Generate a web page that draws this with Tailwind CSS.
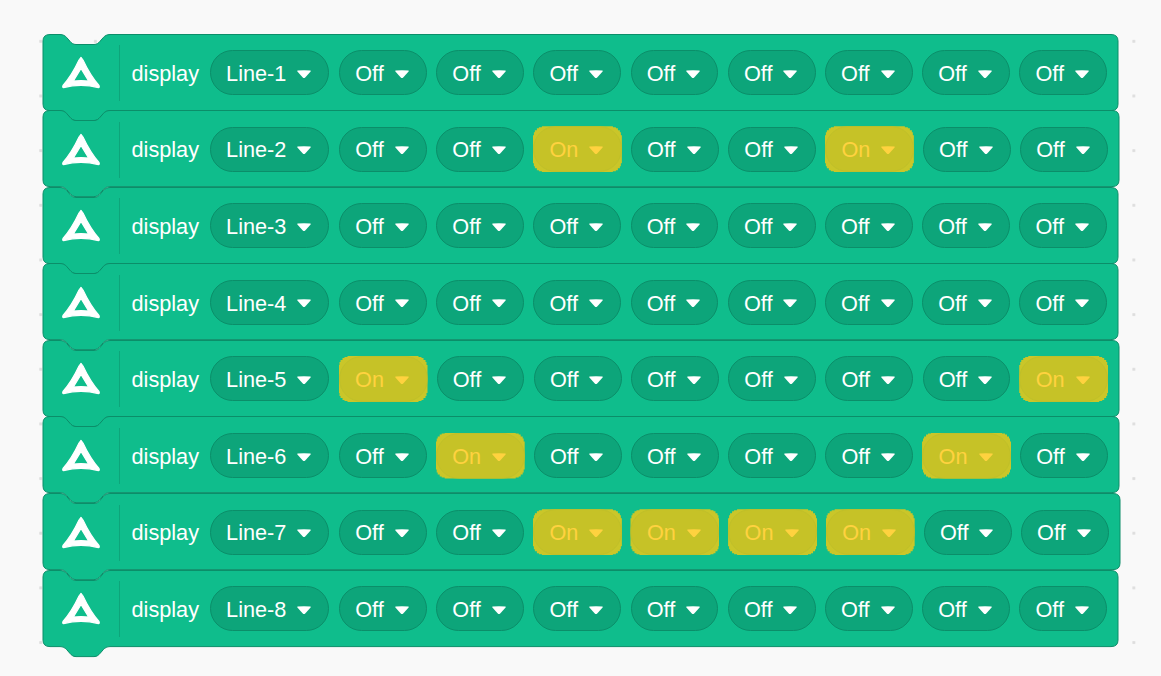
<!DOCTYPE html>
<html lang="en">
<head>
    <meta charset="UTF-8">
    <meta name="viewport" content="width=device-width, initial-scale=1.0">
    <title>Display blocks</title>
    <script src="https://cdn.jsdelivr.net/npm/@tailwindcss/browser@4"></script>
</head>
<body class="bg-[#f9f9f9] min-h-screen overflow-hidden font-['Liberation_Sans',Arial,sans-serif] bg-[radial-gradient(circle,#dedede_1.3px,transparent_1.9px)] bg-[size:54.67px_54.67px] bg-[position:13.4px_14px]">

    <div id="stack" class="pt-[33.5px] pl-[42.5px] flex flex-col"></div>

    <script>
        // 1 = On, 0 = Off
        const rows = [
            [0,0,0,0,0,0,0,0],
            [0,0,1,0,0,1,0,0],
            [0,0,0,0,0,0,0,0],
            [0,0,0,0,0,0,0,0],
            [1,0,0,0,0,0,0,1],
            [0,1,0,0,0,0,1,0],
            [0,0,1,1,1,1,0,0],
            [0,0,0,0,0,0,0,0],
        ];

        const caret = (fill) => `<svg width="16" height="10" viewBox="0 0 16 10" class="shrink-0 translate-y-[1px]"><path d="M1.5 1.5 Q8 0.8 14.5 1.5 Q15 2 14.4 2.8 L9.2 8.4 Q8 9.4 6.8 8.4 L1.6 2.8 Q1 2 1.5 1.5Z" fill="${fill}"/></svg>`;

        const offPill = `<div class="w-[87.8px] h-[45px] shrink-0 flex items-center justify-center gap-[10px] pr-[1px] rounded-full bg-[#0da57a] border border-[#0b8e69] text-white"><span class="pt-[2px]">Off</span>${caret('#fff')}</div>`;

        const onPill = `<div class="w-[89px] h-[46px] -ml-[0.5px] -mr-[0.3px] shrink-0 bg-[#cac629] [clip-path:polygon(0_9px,1px_9px,1px_6px,2px_6px,2px_4px,4px_4px,4px_2px,6px_2px,6px_1px,9px_1px,9px_0,calc(100%-9px)_0,calc(100%-9px)_1px,calc(100%-6px)_1px,calc(100%-6px)_2px,calc(100%-4px)_2px,calc(100%-4px)_4px,calc(100%-2px)_4px,calc(100%-2px)_6px,calc(100%-1px)_6px,calc(100%-1px)_9px,100%_9px,100%_calc(100%-9px),calc(100%-1px)_calc(100%-9px),calc(100%-1px)_calc(100%-6px),calc(100%-2px)_calc(100%-6px),calc(100%-2px)_calc(100%-4px),calc(100%-4px)_calc(100%-4px),calc(100%-4px)_calc(100%-2px),calc(100%-6px)_calc(100%-2px),calc(100%-6px)_calc(100%-1px),calc(100%-9px)_calc(100%-1px),calc(100%-9px)_100%,9px_100%,9px_calc(100%-1px),6px_calc(100%-1px),6px_calc(100%-2px),4px_calc(100%-2px),4px_calc(100%-4px),2px_calc(100%-4px),2px_calc(100%-6px),1px_calc(100%-6px),1px_calc(100%-9px),0_calc(100%-9px))]"><div class="w-full h-full flex items-center justify-center gap-[10px] pr-[1px] rounded-full bg-[#c6c227] border border-[#bfbf2a] text-[#ffd23f]"><span class="pt-[2px]">On</span>${caret('#ffd23f')}</div></div>`;

        const shape = (w) => `M0 7 Q0 0.5 7 0.5 L17 0.5 C20 0.5 22 1.8 23.5 3.3 L27 7.3 C28.5 9 30 10.5 33 10.5 L51 10.5 C54 10.5 55.5 9 57 7.3 L60.5 3.3 C62 1.8 64 0.5 67 0.5 L${w - 7} 0.5 Q${w} 0.5 ${w} 7 L${w} 70.1 Q${w} 76.6 ${w - 7} 76.6 L67 76.6 C64 76.6 62 77.9 60.5 79.4 L57 83.4 C55.5 85.1 54 86.6 51 86.6 L33 86.6 C30 86.6 28.5 85.1 27 83.4 L23.5 79.4 C22 77.9 20 76.6 17 76.6 L7 76.6 Q0 76.6 0 70.1 Z`;

        const html = rows.map((r, i) => {
            const w = 1075 + r.filter(Boolean).length * 0.5;
            const pills = r.map(v => v ? onPill : offPill).join('');
            return `<div class="relative h-[76.6px]" style="width:${w}px">
                <svg class="absolute left-0 top-0 overflow-visible" width="${w}" height="77"><path d="${shape(w)}" fill="#0fbd8c" stroke="#0b8e69" stroke-width="1"/></svg>
                <div class="relative h-full pt-[2.6px] flex items-center text-[21.7px] leading-none text-white">
                    <div class="w-[77px] h-[56px] shrink-0 flex items-center justify-center border-r border-[#0da57a]">
                        <svg width="40" height="36" viewBox="0 0 40 36"><path fill-rule="evenodd" d="M20 2.4 L22 5 Q29 20 38 30.5 Q38.8 32.6 37.4 32.6 Q20 28 2.6 32.6 Q1.2 32.6 2 30.5 Q11 20 18 5 Z M20 13.4 L12.4 26 Q20 25.2 27.6 26 Z" fill="#fff" stroke="#fff" stroke-width="1.2" stroke-linejoin="round"/></svg>
                    </div>
                    <span class="ml-[12px] w-[78px] shrink-0 pt-[1px]">display</span>
                    <div class="w-[119.5px] h-[45px] mb-[1px] shrink-0 flex items-center justify-center gap-[10px] rounded-full bg-[#0da57a] border border-[#0b8e69]"><span class="pt-[2px]">Line-${i + 1}</span>${caret('#fff')}</div>
                    <div class="ml-[10px] mb-[1px] flex items-center gap-[9.4px]">${pills}</div>
                </div>
            </div>`;
        }).join('');
        document.getElementById('stack').innerHTML = html;
    </script>
</body>
</html>
